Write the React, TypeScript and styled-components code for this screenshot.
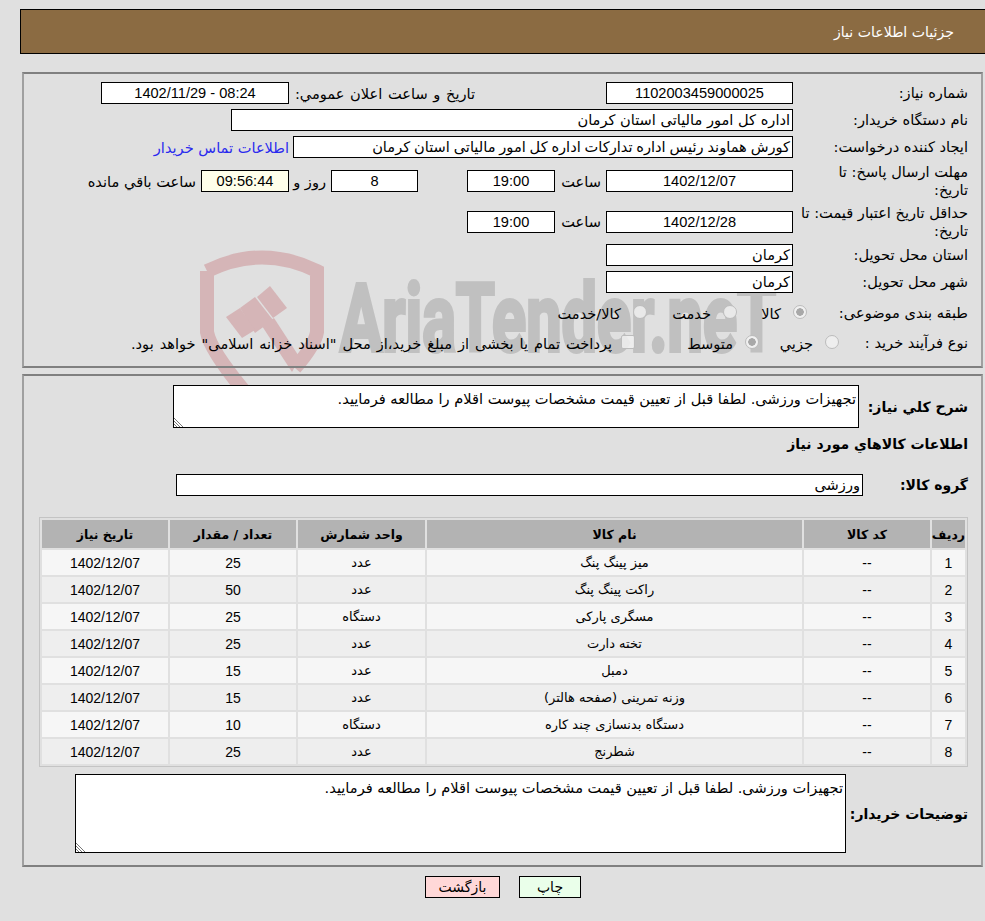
import React from 'react'
import styled, { createGlobalStyle } from 'styled-components'

const GlobalStyle = createGlobalStyle`
  html, body {
    margin: 0;
    padding: 0;
    background: #e0e0e0;
  }
`
const Page = styled.div`
  position: relative;
  width: 985px;
  height: 921px;
  overflow: hidden;
  padding-top: 9px;
  box-sizing: border-box;
  direction: rtl;
  color: #000;
  font-family: 'DejaVu Sans', sans-serif;
  font-size: 14.6px;
`
const Watermark = styled.svg`
  position: absolute;
  top: 0;
  left: 0;
  pointer-events: none;
`
const Header = styled.div`
  position: relative;
  display: flex;
  align-items: center;
  box-sizing: border-box;
  width: 970px;
  height: 45px;
  margin-right: -5px;
  padding-right: 35px;
  background: #8b6b42;
  border: 1px solid #000;
  color: #fff;
  font-size: 14.1px;
`
const Panel = styled.div<{ $top: number; $height: number }>`
  position: relative;
  box-sizing: border-box;
  width: 961px;
  height: ${({ $height }) => $height}px;
  margin: ${({ $top }) => $top}px 2px 0 0;
  padding: 8px 13px 0 0;
  border: 2px solid #808080;
  border-right-color: #a0a0a0;
  border-left-color: #a0a0a0;
`
const Rows = styled.div`
  display: flex;
  flex-direction: column;
  gap: 5px;
`
const Row = styled.div<{ $height?: number; $top?: number }>`
  display: flex;
  align-items: center;
  height: ${({ $height }) => $height ?? 22}px;
  margin-top: ${({ $top }) => $top ?? 0}px;
`
const Label = styled.div<{ $width?: number }>`
  flex: none;
  width: ${({ $width }) => $width ?? 175}px;
  line-height: 18px;
  white-space: pre-line;
`
const Field = styled.div<{ $width: number; $bg?: string; $num?: boolean; $spread?: number }>`
  flex: none;
  box-sizing: border-box;
  width: ${({ $width }) => $width}px;
  height: 22px;
  padding: 0 2px;
  background: ${({ $bg }) => $bg ?? '#fff'};
  border: 1px solid #000;
  line-height: 20px;
  white-space: nowrap;
  overflow: hidden;
  direction: ${({ $num }) => ($num ? 'ltr' : 'rtl')};
  text-align: ${({ $num }) => ($num ? 'center' : 'right')};
  word-spacing: ${({ $spread }) => $spread ?? 0}px;
  font-family: ${({ $num }) => ($num ? "'Liberation Sans', sans-serif" : 'inherit')};
`
const Caption = styled.div<{ $width: number; $pad?: number; $spread?: number }>`
  flex: none;
  box-sizing: border-box;
  width: ${({ $width }) => $width}px;
  padding-right: ${({ $pad }) => $pad ?? 5}px;
  white-space: nowrap;
  word-spacing: ${({ $spread }) => $spread ?? 0}px;
`
const ContactLink = styled.a`
  margin-right: 4px;
  color: #2a2aee;
  cursor: pointer;
  white-space: nowrap;
`
const Option = styled.label<{ $width?: number; $gap?: number; $spread?: number }>`
  display: flex;
  flex: none;
  align-items: center;
  gap: ${({ $gap }) => $gap ?? 12}px;
  width: ${({ $width }) => ($width ? `${$width}px` : 'auto')};
  white-space: nowrap;
  word-spacing: ${({ $spread }) => $spread ?? 0}px;
`
const Radio = styled.input<{ $on?: boolean }>`
  appearance: none;
  flex: none;
  box-sizing: border-box;
  width: 14px;
  height: 14px;
  margin: 0 0 2px;
  border: 1px solid #bcbcbc;
  border-radius: 50%;
  background: ${({ $on }) =>
    $on ? 'radial-gradient(circle, #a8a8a8 0 3.5px, #f0f0f0 4px)' : 'rgba(240, 240, 240, 0.85)'};
`
const Check = styled.input`
  appearance: none;
  flex: none;
  box-sizing: border-box;
  width: 14px;
  height: 14px;
  margin: 0 0 2px;
  border: 1px solid #bcbcbc;
  border-radius: 2px;
  background: rgba(240, 240, 240, 0.85);
`
const StrongLabel = styled.div<{ $width?: number }>`
  flex: none;
  width: ${({ $width }) => ($width ? `${$width}px` : 'auto')};
  font-size: 14px;
  font-weight: 700;
  white-space: nowrap;
`
const Note = styled.textarea<{ $width: number; $height: number }>`
  flex: none;
  box-sizing: border-box;
  width: ${({ $width }) => $width}px;
  height: ${({ $height }) => $height}px;
  margin: 0;
  padding: 4px 2px 0;
  background: #fff;
  border: 1px solid #000;
  border-radius: 0;
  outline: none;
  color: #000;
  font-family: inherit;
  font-size: 14.6px;
  line-height: 17px;
  &::-webkit-resizer {
    background: linear-gradient(
      45deg,
      #fff 0 1.5px,
      #777 1.5px 2.5px,
      #fff 2.5px 3.7px,
      #777 3.7px 4.7px,
      #fff 4.7px 5.9px,
      #777 5.9px 6.9px,
      #fff 6.9px
    );
  }
`
const Grid = styled.table`
  width: 929px;
  margin: 0;
  table-layout: fixed;
  border: 1px solid #c4c4c4;
  border-spacing: 2px;
`
const HeadCell = styled.th`
  height: 28px;
  padding: 0;
  background: #b3b3b3;
  font-weight: 700;
  font-size: 12.5px;
  text-align: center;
`
const Cell = styled.td<{ $even: boolean; $num?: boolean }>`
  height: 25px;
  padding: 0;
  background: ${({ $even }) => ($even ? '#eeeeee' : '#f6f6f6')};
  text-align: center;
  font-family: ${({ $num }) => ($num ? "'Liberation Sans', sans-serif" : 'inherit')};
  font-size: ${({ $num }) => ($num ? '14px' : '13px')};
`
const Actions = styled.div`
  position: relative;
  display: flex;
  justify-content: center;
  gap: 19px;
  margin-top: 9px;
  padding-left: 21px;
`
const ActionButton = styled.button<{ $bg: string; $width: number }>`
  box-sizing: border-box;
  width: ${({ $width }) => $width}px;
  height: 22px;
  padding: 0;
  background: ${({ $bg }) => $bg};
  border: 1px solid #000;
  border-radius: 0;
  color: #000;
  font-family: inherit;
  font-size: 14px;
  cursor: pointer;
`

const NOTE = 'تجهیزات ورزشی. لطفا قبل از تعیین قیمت مشخصات پیوست اقلام را مطالعه فرمایید.'

const COLUMNS: [string, number][] = [
  ['رديف', 33],
  ['کد کالا', 126],
  ['نام کالا', 375],
  ['واحد شمارش', 127],
  ['تعداد / مقدار', 126],
  ['تاریخ نیاز', 126],
]

const ITEMS: [string, string, string][] = [
  ['میز پینگ پنگ', 'عدد', '25'],
  ['راکت پینگ پنگ', 'عدد', '50'],
  ['مسگری پارکی', 'دستگاه', '25'],
  ['تخته دارت', 'عدد', '25'],
  ['دمبل', 'عدد', '15'],
  ['وزنه تمرینی (صفحه هالتر)', 'عدد', '15'],
  ['دستگاه بدنسازی چند کاره', 'دستگاه', '10'],
  ['شطرنج', 'عدد', '25'],
]

const AriaMark = () => (
  <Watermark width={985} height={921} viewBox="0 0 985 921">
    <g fill="none" stroke="#d5b5b7" strokeWidth={14}>
      <path d="M207 271Q262 244 317 271L317 332Q315 345 295 368" />
      <path d="M207 271L207 332Q210 350 245 392" />
    </g>
    <g fill="#d5b5b7">
      <polygon points="257,297 270,286 287,308 273,318" />
      <polygon points="240,308 255,297 273,320 255,333" />
      <polygon points="226,317 240,308 255,330 242,338" />
      <polygon points="262,326 274,318 300,358 292,372" />
    </g>
    <text
      x={340}
      y={351}
      direction="ltr"
      textLength={436}
      lengthAdjust="spacingAndGlyphs"
      fill="#c0c0c0"
      stroke="#c0c0c0"
      strokeWidth={4}
      fontFamily="Roboto, sans-serif"
      fontWeight={700}
      fontSize={94}
    >
      AriaTender.neT
    </text>
  </Watermark>
)

export default function App() {
  return (
    <Page>
      <GlobalStyle />
      <AriaMark />
      <Header>جزئیات اطلاعات نیاز</Header>

      <Panel $top={18} $height={296}>
        <Rows>
          <Row>
            <Label>شماره نیاز:</Label>
            <Field $width={187} $num>1102003459000025</Field>
            <Caption $width={317} $pad={131} $spread={1}>تاریخ و ساعت اعلان عمومي:</Caption>
            <Field $width={188} $num>1402/11/29 - 08:24</Field>
          </Row>
          <Row>
            <Label>نام دستگاه خریدار:</Label>
            <Field $width={562}>اداره کل امور مالیاتی استان کرمان</Field>
          </Row>
          <Row>
            <Label>ایجاد کننده درخواست:</Label>
            <Field $width={500} $spread={-0.8}>کورش هماوند رئیس اداره تدارکات اداره کل امور مالیاتی استان کرمان</Field>
            <ContactLink>اطلاعات تماس خریدار</ContactLink>
          </Row>
          <Row $height={36}>
            <Label>{'مهلت ارسال پاسخ: تا\nتاریخ:'}</Label>
            <Field $width={187} $num>1402/12/07</Field>
            <Caption $width={51}>ساعت</Caption>
            <Field $width={88} $num>19:00</Field>
            <Caption $width={49} />
            <Field $width={87} $num>8</Field>
            <Caption $width={42}>روز و</Caption>
            <Field $width={88} $num $bg="#ffffea">09:56:44</Field>
            <Caption $width={120}>ساعت باقي مانده</Caption>
          </Row>
          <Row $height={35}>
            <Label>{'حداقل تاریخ اعتبار قیمت: تا\nتاریخ:'}</Label>
            <Field $width={187} $num>1402/12/28</Field>
            <Caption $width={51}>ساعت</Caption>
            <Field $width={88} $num>19:00</Field>
          </Row>
          <Row>
            <Label>استان محل تحویل:</Label>
            <Field $width={187}>کرمان</Field>
          </Row>
          <Row>
            <Label>شهر محل تحویل:</Label>
            <Field $width={187}>کرمان</Field>
          </Row>
          <Row $height={30}>
            <Label $width={161}>طبقه بندی موضوعی:</Label>
            <Option $width={70}>
              <Radio type="radio" disabled $on />
              کالا
            </Option>
            <Option $width={90}>
              <Radio type="radio" disabled />
              خدمت
            </Option>
            <Option>
              <Radio type="radio" disabled />
              کالا/خدمت
            </Option>
          </Row>
          <Row $height={20}>
            <Label $width={129}>نوع فرآیند خرید :</Label>
            <Option $width={80}>
              <Radio type="radio" disabled />
              جزيي
            </Option>
            <Option $width={124}>
              <Radio type="radio" disabled $on />
              متوسط
            </Option>
            <Option $gap={9} $spread={1.3}>
              <Check type="checkbox" disabled />
              پرداخت تمام یا بخشی از مبلغ خرید،از محل "اسناد خزانه اسلامی" خواهد بود.
            </Option>
          </Row>
        </Rows>
      </Panel>

      <Panel $top={6} $height={493}>
        <Row $height={43} $top={1}>
          <StrongLabel $width={109}>شرح کلي نیاز:</StrongLabel>
          <Note $width={686} $height={43} readOnly defaultValue={NOTE} />
        </Row>
        <Row $height={32}>
          <StrongLabel>اطلاعات کالاهاي مورد نیاز</StrongLabel>
        </Row>
        <Row $height={23} $top={13}>
          <StrongLabel $width={105}>گروه کالا:</StrongLabel>
          <Field $width={687}>ورزشی</Field>
        </Row>
        <Row $height={250} $top={21}>
          <Grid>
            <colgroup>
              {COLUMNS.map(([name, width]) => (
                <col key={name} width={width} />
              ))}
            </colgroup>
            <thead>
              <tr>
                {COLUMNS.map(([name]) => (
                  <HeadCell key={name}>{name}</HeadCell>
                ))}
              </tr>
            </thead>
            <tbody>
              {ITEMS.map(([name, unit, count], index) => {
                const even = index % 2 === 1
                return (
                  <tr key={name}>
                    <Cell $even={even} $num>{index + 1}</Cell>
                    <Cell $even={even} $num>--</Cell>
                    <Cell $even={even}>{name}</Cell>
                    <Cell $even={even}>{unit}</Cell>
                    <Cell $even={even} $num>{count}</Cell>
                    <Cell $even={even} $num>1402/12/07</Cell>
                  </tr>
                )
              })}
            </tbody>
          </Grid>
        </Row>
        <Row $height={79} $top={7}>
          <StrongLabel $width={122}>توضیحات خریدار:</StrongLabel>
          <Note $width={771} $height={79} readOnly defaultValue={NOTE} />
        </Row>
      </Panel>

      <Actions>
        <ActionButton $bg="#eaffea" $width={62}>چاپ</ActionButton>
        <ActionButton $bg="#ffd8d8" $width={75}>بازگشت</ActionButton>
      </Actions>
    </Page>
  )
}
